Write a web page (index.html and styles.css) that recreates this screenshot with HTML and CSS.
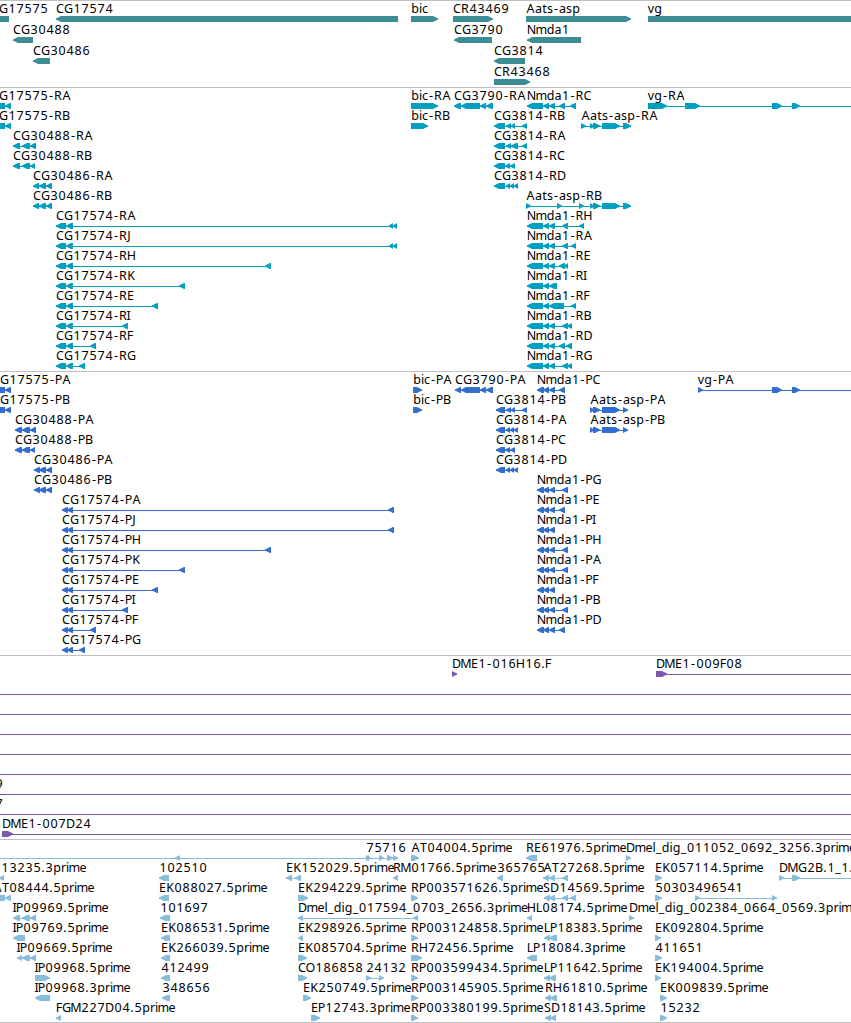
FILE: index.html
```
<!DOCTYPE html>
<html lang="en">
<head>
  <meta charset="UTF-8" />
  <meta name="viewport" content="width=device-width, initial-scale=1.0"/>
  <title>Genome tracks</title>
  <link rel="stylesheet" href="styles.css">
</head>
<body>
<div class="browser">
  <section class="track genes"><svg id="genes"></svg></section>
  <section class="track transcripts"><svg id="transcripts"></svg></section>
  <section class="track proteins"><svg id="proteins"></svg></section>
  <section class="track clones"><svg id="clones"></svg></section>
  <section class="track ests"><svg id="ests"></svg></section>
</div>
<script src="tracks.js"></script>
</body>
</html>
```
FILE: styles.css
```
body {
  margin: 0;
  background: #fff;
  overflow: hidden;
}

.browser {
  display: flex;
  flex-direction: column;
  border-bottom: 1px solid #c0c0c0;
}

.track {
  box-sizing: border-box;
  height: 284px;
  border-top: 1px solid #c0c0c0;
}

.track svg {
  display: block;
  width: 100%;
  height: 100%;
  overflow: hidden;
}

.track text {
  font-family: "Noto Sans", "Open Sans", sans-serif;
  font-size: 12.5px;
  fill: #000;
  text-anchor: middle;
}

.genes {
  height: 87px;
  color: #3d8e94;
}

.transcripts {
  color: #009fbf;
}

.proteins {
  color: #316ecf;
}

.clones {
  height: 184px;
  color: #7858aa;
}

.ests {
  height: 183px;
  color: #88bcdd;
}

.shape {
  fill: currentColor;
}
```
FILE: tracks.js
```
const SVG_NS = 'http://www.w3.org/2000/svg';
const OFF = [900, 905]; // exon past the right edge

// Width of the cell each character sits in, digits are 8
const ADVANCE = {
  A: 9, B: 8, C: 8, D: 9, E: 7, F: 6, G: 9, H: 9, I: 3, J: 4, K: 8, L: 6, M: 10,
  N: 9, O: 9, P: 7, R: 8, S: 7, T: 7, a: 7, b: 8, c: 6, d: 8, e: 7, g: 8, i: 3,
  l: 3, m: 10.5, p: 8, r: 5, s: 6, t: 5, v: 6, '-': 6, '.': 4, _: 6
};

// Each feature: row, label x, label, strand, exons
const genes = [
  [0, -1, 'G17575', '<', [[-10, 9]]],
  [0, 56, 'CG17574', '<', [[56, 398]]],
  [0, 411, 'bic', '>', [[411, 438]]],
  [0, 453, 'CR43469', '>', [[453, 493]]],
  [0, 526, 'Aats-asp', '>', [[526, 631]]],
  [0, 648, 'vg', '>', [[648, 900]]],
  [1, 13, 'CG30488', '<', [[13, 33]]],
  [1, 454, 'CG3790', '<', [[454, 492]]],
  [1, 527, 'Nmda1', '<', [[527, 581]]],
  [2, 33, 'CG30486', '<', [[33, 50]]],
  [2, 494, 'CG3814', '<', [[494, 525]]],
  [3, 494, 'CR43468', '>', [[494, 530]]]
];

const transcripts = [
  [0, -1, 'G17575-RA', '<', [[-5, 5], [5, 11]]],
  [1, -1, 'G17575-RB', '<', [[-5, 5], [5, 11]]],
  [2, 13, 'CG30488-RA', '<', [[13, 20], [22, 30], [30, 36]]],
  [3, 13, 'CG30488-RB', '<', [[13, 20], [22, 30], [30, 35]]],
  [4, 33, 'CG30486-RA', '<', [[33, 39], [39, 46], [46, 52]]],
  [5, 33, 'CG30486-RB', '<', [[33, 39], [39, 46], [46, 52]]],
  [6, 56, 'CG17574-RA', '<', [[56, 66], [66, 73], [389, 393], [393, 397]]],
  [7, 56, 'CG17574-RJ', '<', [[56, 66], [66, 73], [389, 393], [393, 397]]],
  [8, 56, 'CG17574-RH', '<', [[56, 66], [66, 73], [265, 271]]],
  [9, 56, 'CG17574-RK', '<', [[56, 66], [66, 73], [179, 185]]],
  [10, 56, 'CG17574-RE', '<', [[56, 66], [66, 73], [152, 158]]],
  [11, 56, 'CG17574-RI', '<', [[56, 66], [66, 73], [122, 128]]],
  [12, 56, 'CG17574-RF', '<', [[56, 66], [66, 73], [90, 96]]],
  [13, 56, 'CG17574-RG', '<', [[56, 66], [66, 73], [79, 85]]],
  [0, 411, 'bic-RA', '>', [[411, 438]]],
  [1, 411, 'bic-RB', '>', [[411, 428]]],
  [0, 454, 'CG3790-RA', '<', [[454, 461], [461, 480], [480, 486], [486, 493]]],
  [1, 494, 'CG3814-RB', '<', [[494, 505], [506, 511], [511, 515], [522, 527]]],
  [2, 494, 'CG3814-RA', '<', [[494, 505], [506, 511], [511, 518], [522, 527]]],
  [3, 494, 'CG3814-RC', '<', [[494, 505], [505, 510], [510, 515]]],
  [4, 494, 'CG3814-RD', '<', [[494, 505], [506, 510], [510, 514], [514, 518]]],
  [0, 527, 'Nmda1-RC', '<', [[527, 543], [543, 549], [549, 555], [559, 565], [570, 576]]],
  [1, 581, 'Aats-asp-RA', '>', [[581, 586], [590, 594], [593, 600], [602, 620], [623, 631]]],
  [5, 526, 'Aats-asp-RB', '>', [[526, 531], [557, 562], [579, 584], [590, 594], [593, 600], [602, 620], [623, 631]]],
  [6, 527, 'Nmda1-RH', '<', [[527, 543], [543, 549], [549, 555], [562, 568], [579, 584]]],
  [7, 527, 'Nmda1-RA', '<', [[527, 543], [543, 549], [549, 555], [562, 568], [571, 576]]],
  [8, 527, 'Nmda1-RE', '<', [[527, 543], [543, 549], [549, 555], [559, 565], [564, 568]]],
  [9, 527, 'Nmda1-RI', '<', [[527, 543], [543, 549], [549, 557]]],
  [10, 527, 'Nmda1-RF', '<', [[527, 543], [543, 549], [549, 564], [571, 576]]],
  [11, 527, 'Nmda1-RB', '<', [[527, 543], [543, 549], [549, 555], [562, 568], [567, 572]]],
  [12, 527, 'Nmda1-RD', '<', [[527, 543], [543, 549], [549, 555], [559, 565], [566, 572]]],
  [13, 527, 'Nmda1-RG', '<', [[527, 543], [543, 549], [549, 555], [562, 568], [567, 572]]],
  [0, 648, 'vg-RA', '>', [[648, 667], [685, 700], [772, 782], [792, 800], OFF]]
];

const proteins = [
  [0, 0, 'G17575-PA', '<', [[-5, 5], [5, 11]]],
  [1, 0, 'G17575-PB', '<', [[-5, 5], [5, 11]]],
  [2, 15, 'CG30488-PA', '<', [[15, 22], [22, 30], [30, 36]]],
  [3, 15, 'CG30488-PB', '<', [[15, 22], [22, 30], [30, 35]]],
  [4, 34, 'CG30486-PA', '<', [[34, 40], [39, 46], [46, 52]]],
  [5, 34, 'CG30486-PB', '<', [[34, 40], [39, 46], [46, 52]]],
  [6, 62, 'CG17574-PA', '<', [[62, 68], [67, 73], [388, 394]]],
  [7, 62, 'CG17574-PJ', '<', [[62, 68], [67, 73], [388, 394]]],
  [8, 62, 'CG17574-PH', '<', [[62, 68], [67, 73], [265, 271]]],
  [9, 62, 'CG17574-PK', '<', [[62, 68], [67, 73], [179, 185]]],
  [10, 62, 'CG17574-PE', '<', [[62, 68], [67, 73], [152, 158]]],
  [11, 62, 'CG17574-PI', '<', [[62, 68], [67, 73], [122, 128]]],
  [12, 62, 'CG17574-PF', '<', [[62, 68], [67, 73], [90, 96]]],
  [13, 62, 'CG17574-PG', '<', [[62, 68], [67, 73], [79, 85]]],
  [0, 413, 'bic-PA', '>', [[413, 422]]],
  [1, 413, 'bic-PB', '>', [[413, 422]]],
  [0, 455, 'CG3790-PA', '<', [[455, 461], [461, 480], [480, 486], [486, 493]]],
  [1, 496, 'CG3814-PB', '<', [[496, 505], [506, 511], [511, 515], [522, 527]]],
  [2, 496, 'CG3814-PA', '<', [[496, 505], [506, 510], [510, 514], [514, 518]]],
  [3, 496, 'CG3814-PC', '<', [[496, 505], [505, 510], [510, 515]]],
  [4, 496, 'CG3814-PD', '<', [[496, 505], [506, 510], [510, 514], [514, 518]]],
  [1, 590, 'Aats-asp-PA', '>', [[590, 594], [593, 600], [602, 620], [623, 628]]],
  [2, 590, 'Aats-asp-PB', '>', [[590, 594], [593, 600], [602, 620], [623, 628]]],
  [0, 537, 'Nmda1-PC', '<', [[537, 544], [543, 549], [549, 555], [559, 565]]],
  [5, 537, 'Nmda1-PG', '<', [[537, 544], [543, 549], [549, 555], [562, 568]]],
  [6, 537, 'Nmda1-PE', '<', [[537, 544], [543, 549], [549, 555], [559, 565]]],
  [7, 537, 'Nmda1-PI', '<', [[537, 544], [543, 549], [549, 555]]],
  [8, 537, 'Nmda1-PH', '<', [[537, 544], [543, 549], [549, 555], [562, 568]]],
  [9, 537, 'Nmda1-PA', '<', [[537, 544], [543, 549], [549, 555], [562, 568]]],
  [10, 537, 'Nmda1-PF', '<', [[537, 544], [543, 549], [549, 555]]],
  [11, 537, 'Nmda1-PB', '<', [[537, 544], [543, 549], [549, 555], [562, 568]]],
  [12, 537, 'Nmda1-PD', '<', [[537, 544], [543, 549], [549, 555], [559, 565]]],
  [0, 698, 'vg-PA', '>', [[698, 703], [772, 782], [792, 800], OFF]]
];

const clones = [
  [0, 452, 'DME1-016H16.F', '>', [[452, 457]]],
  [0, 656, 'DME1-009F08', '>', [[656, 667], OFF]],
  [1, 0, '', '>', [[-20, -10], OFF]],
  [2, 0, '', '>', [[-20, -10], OFF]],
  [3, 0, '', '>', [[-20, -10], OFF]],
  [4, 0, '', '>', [[-20, -10], OFF]],
  [5, 0, '', '>', [[-20, -10], OFF]],
  [6, -5, '9', '>', [[-20, -10], OFF]],
  [7, -5, '7', '>', [[-20, -10], OFF]],
  [8, 2, 'DME1-007D24', '>', [[2, 13], OFF]]
];

const ests = [
  [0, 0, '', '<', [[-20, -10], [175, 180], [365, 369]]],
  [0, 366, '75716', '>', [[366, 371], [379, 384], [387, 393], [393, 398]]],
  [0, 411, 'AT04004.5prime', '>', [[411, 419]]],
  [0, 526, 'RE61976.5prime', '<', [[526, 537]]],
  [0, 626, 'Dmel_dig_011052_0692_3256.3prime', '>', [[626, 631]]],
  [1, 1, '13235.3prime', '<', [[-1, 4]]],
  [1, 159, '102510', '<', [[159, 169]]],
  [1, 286, 'EK152029.5prime', '<', [[286, 292], [295, 301]]],
  [1, 393, 'RM01766.5prime', '<', [[393, 398]]],
  [1, 497, '365765', '<', [[497, 503]]],
  [1, 543, 'AT27268.5prime', '<', [[543, 549], [549, 555], [562, 568]]],
  [1, 655, 'EK057114.5prime', '>', [[655, 662]]],
  [1, 779, 'DMG2B.1_1.', '>', [[779, 784], [792, 800], OFF]],
  [2, -7, 'AT08444.5prime', '<', [[-5, 5], [5, 11]]],
  [2, 159, 'EK088027.5prime', '<', [[159, 169]]],
  [2, 298, 'EK294229.5prime', '>', [[298, 308]]],
  [2, 411, 'RP003571626.5prime', '>', [[411, 418]]],
  [2, 543, 'SD14569.5prime', '<', [[544, 550], [549, 555], [562, 568], [570, 576]]],
  [2, 655, '50303', '>', [[655, 662]]],
  [2, 695, '496541', '>', [[695, 700], [772, 777]]],
  [3, 13, 'IP09969.5prime', '<', [[13, 20], [22, 30], [30, 36]]],
  [3, 160, '101697', '<', [[160, 170]]],
  [3, 298, 'Dmel_dig_017594_0703_2656.3prime', '<', [[298, 303], [413, 418]]],
  [3, 527, 'HL08174.5prime', '<', [[527, 532]]],
  [3, 629, 'Dmel_dig_002384_0664_0569.3prime', '>', [[629, 634]]],
  [4, 13, 'IP09769.5prime', '<', [[13, 25]]],
  [4, 161, 'EK086531.5prime', '<', [[161, 170]]],
  [4, 298, 'EK298926.5prime', '<', [[298, 303]]],
  [4, 411, 'RP003124858.5prime', '>', [[411, 418]]],
  [4, 544, 'LP18383.5prime', '<', [[544, 550], [549, 557]]],
  [4, 655, 'EK092804.5prime', '>', [[655, 661]]],
  [5, 17, 'IP09669.5prime', '<', [[17, 22], [22, 30], [30, 36]]],
  [5, 161, 'EK266039.5prime', '<', [[161, 170]]],
  [5, 298, 'EK085704.5prime', '>', [[298, 307]]],
  [5, 411, 'RH72456.5prime', '>', [[411, 422]]],
  [5, 527, 'LP18084.3prime', '<', [[527, 537]]],
  [5, 655, '411651', '>', [[655, 662]]],
  [6, 35, 'IP09968.5prime', '>', [[35, 50]]],
  [6, 161, '412499', '<', [[161, 170]]],
  [6, 298, 'CO186858', '>', [[298, 307]]],
  [6, 366, '24132', '>', [[366, 371], [379, 384]]],
  [6, 411, 'RP003599434.5prime', '>', [[411, 418]]],
  [6, 544, 'LP11642.5prime', '<', [[544, 550], [549, 556]]],
  [6, 655, 'EK194004.5prime', '>', [[655, 661]]],
  [7, 35, 'IP09968.3prime', '<', [[35, 50]]],
  [7, 162, '348656', '<', [[162, 170]]],
  [7, 303, 'EK250749.5prime', '>', [[303, 311]]],
  [7, 411, 'RP003145905.5prime', '>', [[411, 418]]],
  [7, 545, 'RH61810.5prime', '<', [[545, 551], [550, 557]]],
  [7, 660, 'EK009839.5prime', '>', [[660, 667]]],
  [8, 56, 'FGM227D04.5prime', '<', [[56, 61]]],
  [8, 311, 'EP12743.3prime', '>', [[311, 320]]],
  [8, 411, 'RP003380199.5prime', '>', [[411, 418]]],
  [8, 544, 'SD18143.5prime', '<', [[545, 551], [550, 556]]],
  [8, 660, '15232', '>', [[660, 667]]]
];

function add(svg, name, attrs) {
  const el = document.createElementNS(SVG_NS, name);
  Object.keys(attrs).forEach(key => el.setAttribute(key, attrs[key]));
  svg.appendChild(el);
  return el;
}

// Box with a pointed end on the strand side
function arrowPoints(start, end, y, strand) {
  const head = Math.min(5, end - start);
  if (strand === '<') {
    return `${start},${y + 3.5} ${start},${y + 2.5} ${start + head},${y} ${end},${y} ${end},${y + 6} ${start + head},${y + 6}`;
  }
  return `${end},${y + 3.5} ${end},${y + 2.5} ${end - head},${y} ${start},${y} ${start},${y + 6} ${end - head},${y + 6}`;
}

function drawTrack(id, features, rowHeight) {
  const svg = document.getElementById(id);

  features.forEach(([row, x, label, strand, exons]) => {
    const top = row * rowHeight;
    const first = exons[0][0];
    const last = exons[exons.length - 1][1];

    add(svg, 'rect', { class: 'shape', x: first, y: top + 18, width: last - first, height: 1 });
    exons.forEach(([start, end]) => {
      add(svg, 'polygon', { class: 'shape', points: arrowPoints(start, end, top + 15, strand) });
    });

    if (label) {
      let pos = x;
      const centers = label.split('').map(ch => {
        const width = ADVANCE[ch] || 8;
        pos += width;
        return pos - width / 2;
      });
      add(svg, 'text', { x: centers.join(' '), y: top + 12 }).textContent = label;
    }
  });
}

drawTrack('genes', genes, 21);
drawTrack('transcripts', transcripts, 20);
drawTrack('proteins', proteins, 20);
drawTrack('clones', clones, 20);
drawTrack('ests', ests, 20);
```
